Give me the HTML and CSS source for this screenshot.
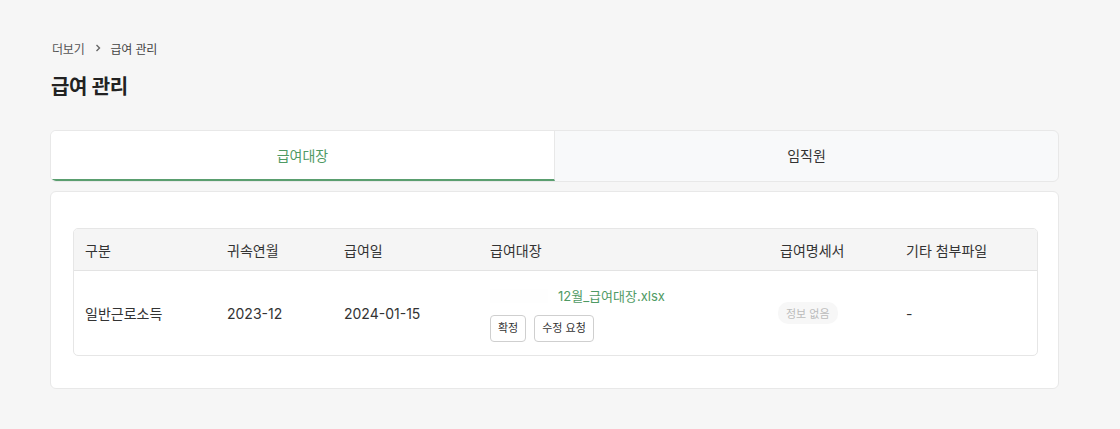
FILE: index.html
```html
<!DOCTYPE html>
<html lang="ko">
<head>
<meta charset="utf-8">
<link rel="stylesheet" href="styles.css">
</head>
<body>
<div class="page">
  <nav class="crumbs">
    <span>더보기</span>
    <svg class="chev" width="8" height="8" viewBox="0 0 8 8"><path d="M2.5 1 L5.5 4 L2.5 7" fill="none" stroke="#666" stroke-width="1.4"/></svg>
    <span class="cur">급여 관리</span>
  </nav>
  <h1 class="title">급여 관리</h1>

  <div class="tabs">
    <div class="tab active">급여대장</div>
    <div class="tab">임직원</div>
  </div>

  <section class="card">
    <table class="tbl">
      <colgroup>
        <col style="width:142px"><col style="width:117px"><col style="width:146px"><col style="width:290px"><col style="width:126px"><col style="width:142px">
      </colgroup>
      <thead>
        <tr><th>구분</th><th>귀속연월</th><th>급여일</th><th>급여대장</th><th>급여명세서</th><th>기타 첨부파일</th></tr>
      </thead>
      <tbody>
        <tr>
          <td>일반근로소득</td>
          <td>2023-12</td>
          <td>2024-01-15</td>
          <td>
            <div class="file">
              <span class="ghost"></span>
              <a class="link">12월_급여대장.xlsx</a>
            </div>
            <div class="btns">
              <button class="btn">확정</button>
              <button class="btn">수정 요청</button>
            </div>
          </td>
          <td><span class="pill">정보 없음</span></td>
          <td>-</td>
        </tr>
      </tbody>
    </table>
  </section>
</div>
</body>
</html>
```
FILE: styles.css
```css
* { box-sizing: border-box; }
html, body { margin: 0; padding: 0; background: #f6f6f6; }
body {
  font-family: Inter, "Noto Sans CJK KR", sans-serif;
  color: #222;
}
.page { padding: 39px 61px 0 50px; }
.crumbs {
  display: flex; align-items: center; gap: 8px;
  font-size: 12px; color: #555; height: 18px; padding-left: 2px;
  letter-spacing: -0.2px;
}
.crumbs .cur { color: #444; }
.chev { margin: 0 1px; }
.title {
  margin: 15px 0 0 1px; font-size: 20px; font-weight: 700; color: #222;
  line-height: 30px; letter-spacing: -0.3px;
}
.tabs {
  margin-top: 28px;
  display: flex; height: 52px;
  border: 1px solid #e8e8e8; border-radius: 6px;
  background: #f8f9fa; overflow: hidden;
}
.tab {
  flex: 1; display: flex; align-items: center; justify-content: center;
  font-size: 14px; color: #333; padding-bottom: 2px;
}
.tab.active {
  background: #fff; color: #4f9a64;
  border-bottom: 2px solid #5a9e6f;
  border-right: 1px solid #e8e8e8;
  padding-bottom: 0;
}
.card {
  margin-top: 9px;
  background: #fff; border: 1px solid #e8e8e8; border-radius: 6px;
  padding: 36px 22px 32px 22px;
}
.tbl {
  width: 963px; border-collapse: separate; border-spacing: 0;
  table-layout: fixed;
  border: 1px solid #e6e6e6; border-radius: 5px; overflow: hidden;
  font-size: 14px;
}
.tbl th {
  background: #f5f5f5; text-align: left; font-weight: 400; color: #333;
  height: 42px; padding: 0 11px; border-bottom: 1px solid #e3e3e3;
}
.tbl td {
  height: 84px; padding: 0 11px; color: #333; vertical-align: middle;
}
.file { display: flex; align-items: center; height: 20px; margin-top: 1px; }
.ghost { width: 58px; height: 14px; margin-right: 10px; background: #fefefe; }
.link { color: #4f9a64; font-size: 13px; text-decoration: none; }
.btns { display: flex; gap: 8px; margin-top: 9px; }
.btn {
  font-family: inherit; font-size: 11px; color: #333;
  background: #fff; border: 1px solid #cfcfcf; border-radius: 4px;
  height: 27px; padding: 0 7px; line-height: 1;
}
.pill {
  display: inline-block; background: #f7f7f7; color: #bbb;
  font-size: 11px; padding: 3px 8px; border-radius: 10px; margin-left: -2px;
}
```
